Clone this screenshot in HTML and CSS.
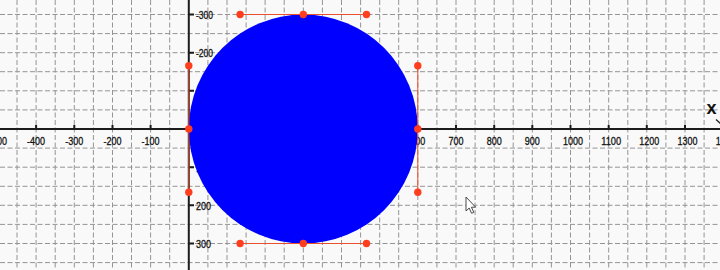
FILE: index.html
```html
<!DOCTYPE html>
<html>
<head>
<meta charset="utf-8">
<link rel="stylesheet" href="styles.css">
</head>
<body>
<div class="stage">
<svg class="plot" width="720" height="270" viewBox="0 0 720 270" xmlns="http://www.w3.org/2000/svg">
  <g class="grid">
    <path d="M17 0V270M36.1 0V270M55.2 0V270M74.3 0V270M93.4 0V270M112.5 0V270M131.5 0V270M150.6 0V270M169.7 0V270M207.9 0V270M227 0V270M246.1 0V270M265.1 0V270M284.2 0V270M303.3 0V270M322.4 0V270M341.5 0V270M360.6 0V270M379.7 0V270M398.7 0V270M417.8 0V270M436.9 0V270M456 0V270M475.1 0V270M494.2 0V270M513.2 0V270M532.3 0V270M551.4 0V270M570.5 0V270M589.6 0V270M608.7 0V270M627.8 0V270M646.8 0V270M665.9 0V270M685 0V270M704.1 0V270"/>
    <path d="M0 14.5H720M0 33.6H720M0 52.7H720M0 71.7H720M0 90.8H720M0 109.9H720M0 148.1H720M0 167.2H720M0 186.3H720M0 205.3H720M0 224.4H720M0 243.5H720M0 262.6H720"/>
  </g>
  <g class="axis">
    <path d="M0 129H724"/>
    <path d="M188.8 0V270"/>
    <path class="ticks" d="M36.1 125V129M74.3 125V129M112.5 125V129M150.6 125V129M227 125V129M265.1 125V129M303.3 125V129M341.5 125V129M379.7 125V129M417.8 125V129M456 125V129M494.2 125V129M532.3 125V129M570.5 125V129M608.7 125V129M646.8 125V129M685 125V129"/>
    <path class="ticks" d="M188.8 14.5H194M188.8 52.7H194M188.8 90.8H194M188.8 167.2H194M188.8 205.3H194M188.8 243.5H194"/>
    <path class="arrow" d="M716 119.5L721.5 124.5"/>
  </g>
  <g class="labels">
    <text x="-11" y="145" textLength="18" lengthAdjust="spacingAndGlyphs">-500</text>
    <text x="27.1" y="145" textLength="18" lengthAdjust="spacingAndGlyphs">-400</text>
    <text x="65.3" y="145" textLength="18" lengthAdjust="spacingAndGlyphs">-300</text>
    <text x="103.5" y="145" textLength="18" lengthAdjust="spacingAndGlyphs">-200</text>
    <text x="141.6" y="145" textLength="18" lengthAdjust="spacingAndGlyphs">-100</text>
    <text x="219.5" y="145" textLength="15" lengthAdjust="spacingAndGlyphs">100</text>
    <text x="257.6" y="145" textLength="15" lengthAdjust="spacingAndGlyphs">200</text>
    <text x="295.8" y="145" textLength="15" lengthAdjust="spacingAndGlyphs">300</text>
    <text x="334" y="145" textLength="15" lengthAdjust="spacingAndGlyphs">400</text>
    <text x="372.2" y="145" textLength="15" lengthAdjust="spacingAndGlyphs">500</text>
    <text x="410.3" y="145" textLength="15" lengthAdjust="spacingAndGlyphs">600</text>
    <text x="448.5" y="145" textLength="15" lengthAdjust="spacingAndGlyphs">700</text>
    <text x="486.7" y="145" textLength="15" lengthAdjust="spacingAndGlyphs">800</text>
    <text x="524.8" y="145" textLength="15" lengthAdjust="spacingAndGlyphs">900</text>
    <text x="563" y="145" textLength="20" lengthAdjust="spacingAndGlyphs">1000</text>
    <text x="601.2" y="145" textLength="20" lengthAdjust="spacingAndGlyphs">1100</text>
    <text x="639.3" y="145" textLength="20" lengthAdjust="spacingAndGlyphs">1200</text>
    <text x="677.5" y="145" textLength="20" lengthAdjust="spacingAndGlyphs">1300</text>
    <text x="715.7" y="145" textLength="20" lengthAdjust="spacingAndGlyphs">1400</text>

    <text x="196" y="19" textLength="17" lengthAdjust="spacingAndGlyphs">-300</text>
    <text x="196" y="57.2" textLength="17" lengthAdjust="spacingAndGlyphs">-200</text>
    <text x="196" y="95.3" textLength="17" lengthAdjust="spacingAndGlyphs">-100</text>
    <text x="196" y="171.7" textLength="15" lengthAdjust="spacingAndGlyphs">100</text>
    <text x="196" y="209.8" textLength="15" lengthAdjust="spacingAndGlyphs">200</text>
    <text x="196" y="248" textLength="15" lengthAdjust="spacingAndGlyphs">300</text>
    <text class="axis-name" x="706.5" y="114">x</text>
  </g>
  <circle class="shape" cx="303.3" cy="129" r="114.5"/>
  <g class="handles">
    <path d="M240.1 14.5H366.5M240.1 243.5H366.5M188.8 65.8V192.2M417.8 65.8V192.2"/>
  </g>
  <g class="points">
    <circle cx="240.1" cy="14.5" r="3.7"/>
    <circle cx="303.3" cy="14.5" r="3.7"/>
    <circle cx="366.5" cy="14.5" r="3.7"/>
    <circle cx="240.1" cy="243.5" r="3.7"/>
    <circle cx="303.3" cy="243.5" r="3.7"/>
    <circle cx="366.5" cy="243.5" r="3.7"/>
    <circle cx="188.8" cy="65.8" r="3.7"/>
    <circle cx="188.8" cy="129" r="3.7"/>
    <circle cx="188.8" cy="192.2" r="3.7"/>
    <circle cx="417.8" cy="65.8" r="3.7"/>
    <circle cx="417.8" cy="129" r="3.7"/>
    <circle cx="417.8" cy="192.2" r="3.7"/>
  </g>
  <path class="cursor" d="M466 197L466 211L469.2 208L471.6 213.3L473.8 212.3L471.4 207.2L475.6 207.2Z"/>
</svg>
</div>
</body>
</html>
```
FILE: styles.css
```css
html, body {
  margin: 0;
  padding: 0;
  background: #f9f9f9;
}

.stage {
  width: 720px;
  height: 270px;
  overflow: hidden;
}

.plot {
  display: block;
  background: #f9f9f9;
}

.grid path {
  fill: none;
  stroke: #949494;
  stroke-width: 1;
  stroke-dasharray: 5 2.5;
}

.axis path {
  fill: none;
  stroke: #1c1c1c;
  stroke-width: 2;
}

.axis .arrow {
  stroke-width: 1.2;
}

.labels text {
  font-family: "Liberation Sans", Arial, sans-serif;
  font-size: 11px;
  fill: #111;
  stroke: #111;
  stroke-width: 0.3;
}

.labels .axis-name {
  font-size: 18px;
  font-weight: bold;
  stroke-width: 0;
}

.shape {
  fill: #0000ff;
}

.handles path {
  fill: none;
  stroke: #e8512c;
  stroke-width: 1;
}

.points circle {
  fill: #ff3d1f;
}

.cursor {
  fill: #ffffff;
  stroke: #4a4a4a;
  stroke-width: 1;
  stroke-linejoin: round;
}
```
